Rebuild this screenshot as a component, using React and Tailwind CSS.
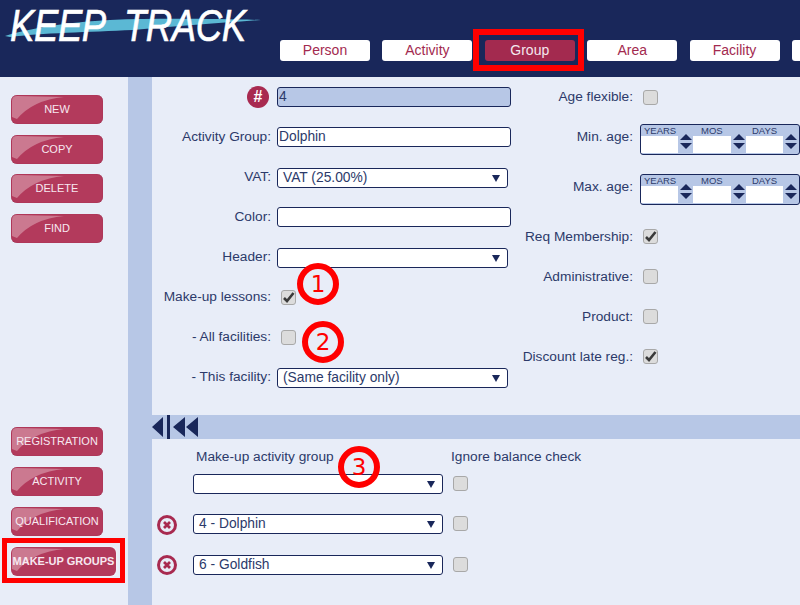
import React from "react";

const tabs = ["Person", "Activity", "Group", "Area", "Facility", ""];
const topButtons = ["NEW", "COPY", "DELETE", "FIND"];
const bottomButtons = ["REGISTRATION", "ACTIVITY", "QUALIFICATION"];

function Logo() {
  return (
    <div className="relative w-[280px] h-[77px] shrink-0">
      <svg className="absolute left-0 top-0" width="280" height="50" viewBox="0 0 280 50">
        <path d="M5 36 C30 28 70 22 110 20 C160 18 220 19 261 20 C220 23 170 27 133 30 C90 32 40 33 10 37 Z" fill="#5bb8d4" />
      </svg>
      <span className="absolute left-[10px] top-[1px] origin-left scale-x-[0.83] font-['Liberation_Sans',sans-serif] italic text-[44px] leading-[50px] tracking-[-0.5px] text-white whitespace-pre [-webkit-text-stroke:0.6px_white]">
        KEEP  TRACK
      </span>
    </div>
  );
}

function Tab({ label }) {
  const active = label === "Group";
  return (
    <div
      className={`relative w-[90px] h-[21px] shrink-0 rounded-[3px] flex items-center justify-center text-[14px] ${
        active ? "bg-[#a32a4f] text-[#f4e8ee]" : "bg-white text-[#a32a4f]"
      }`}
    >
      {label}
      {active && (
        <div className="absolute left-[-12px] right-[-9px] top-[-11px] bottom-[-10px] border-[6px] border-[#ff0000]" />
      )}
    </div>
  );
}

function SideButton({ label, wide }) {
  return (
    <div
      className={`relative h-[29px] rounded-[6px] bg-[#b33a5c] flex items-center justify-center text-[#f7e8f0] whitespace-nowrap ${
        wide ? "w-[105px] text-[11px] font-bold shadow-[0_0_3px_#ffffff]" : "w-[92px] text-[11px] shadow-[inset_0_0_1px_#8a2040]"
      }`}
    >
      <svg className="absolute left-0 top-0" width="70" height="29" viewBox="0 0 70 29">
        <path d="M1 6 Q1 1 6 1 L53 2 Q22 5 6 24 L1 22 Z" fill="#ffffff" fillOpacity="0.32" />
      </svg>
      <span className="relative">{label}</span>
    </div>
  );
}

function Checkbox({ checked, className = "" }) {
  return (
    <div
      className={`relative w-[15px] h-[15px] shrink-0 rounded-[3px] bg-[#dcdcdc] border-[1.5px] border-[#a8a8a8] ${className}`}
    >
      {checked && (
        <svg className="absolute left-[-1px] top-[-1px]" width="15" height="15" viewBox="0 0 15 15">
          <path d="M3 8 L6 11 L12.5 3" fill="none" stroke="#3a3a3a" strokeWidth="2.6" />
        </svg>
      )}
    </div>
  );
}

function Select({ value, className = "" }) {
  return (
    <div
      className={`h-[20px] rounded-[3px] border border-[#19275a] bg-white flex items-center justify-between pl-[5px] pr-[7px] text-[13.8px] text-[#2c3a6a] ${className}`}
    >
      <span>{value}</span>
      <svg width="8" height="7" viewBox="0 0 8 7">
        <path d="M0 0 H8 L4 7 Z" fill="#19275a" />
      </svg>
    </div>
  );
}

function TextInput({ value, blue }) {
  return (
    <div
      className={`w-[234px] h-[20px] rounded-[3px] border border-[#19275a] flex items-center pl-[1px] pt-[1px] text-[13.8px] text-[#2c3a6a] ${
        blue ? "bg-[#b7c7e6]" : "bg-white"
      }`}
    >
      {value}
    </div>
  );
}

function FormRow({ label, children }) {
  return (
    <div className="h-10 flex items-center">
      <div className="w-[119px] mr-[6px] text-right text-[13.7px] text-[#2c3a6a] whitespace-nowrap">
        {label}
      </div>
      {children}
    </div>
  );
}

function CheckRow({ label, checked, labelClass = "mt-[2px]" }) {
  return (
    <div className="h-10 flex items-center">
      <div className={`w-[118px] mr-[10px] text-right text-[13.7px] text-[#2c3a6a] whitespace-nowrap ${labelClass}`}>
        {label}
      </div>
      <Checkbox checked={checked} />
    </div>
  );
}

function Spinner() {
  return (
    <div className="w-[15px] h-[17px] -mt-[3px] flex flex-col items-center justify-center gap-[3px]">
      <svg width="12" height="6" viewBox="0 0 12 6">
        <path d="M0 6 L6 0 L12 6 Z" fill="#19275a" />
      </svg>
      <svg width="12" height="6" viewBox="0 0 12 6">
        <path d="M0 0 H12 L6 6 Z" fill="#19275a" />
      </svg>
    </div>
  );
}

function AgeBox() {
  return (
    <div className="w-[160px] h-[31px] shrink-0 rounded-[3px] border border-[#19275a] bg-[#b7c7e6] overflow-hidden">
      <div className="h-[11px] flex text-[9.5px] leading-[12px] text-[#2c3a6a]">
        <span className="w-[52px] pl-[3px]">YEARS</span>
        <span className="w-[53px] pl-[8px]">MOS</span>
        <span className="pl-[6px]">DAYS</span>
      </div>
      <div className="flex">
        <div className="w-[37px] h-[17px] bg-white" />
        <Spinner />
        <div className="w-[38px] h-[17px] bg-white" />
        <Spinner />
        <div className="w-[37px] h-[17px] bg-white" />
        <Spinner />
      </div>
    </div>
  );
}

function AgeRow({ label, className }) {
  return (
    <div className={`flex items-center ${className}`}>
      <div className="w-[118px] mr-[7px] text-right text-[13.7px] text-[#2c3a6a] mb-[5px]">{label}</div>
      <AgeBox />
    </div>
  );
}

function Marker({ n, className }) {
  return (
    <div
      className={`absolute w-[42px] h-[42px] rounded-full border-[6px] border-[#ff0000] flex items-center justify-center font-['DejaVu_Sans',sans-serif] text-[23px] leading-none text-[#ff0000] ${className}`}
    >
      {n}
    </div>
  );
}

function RemoveIcon() {
  return (
    <svg width="20" height="20" viewBox="0 0 20 20" className="shrink-0">
      <circle cx="10" cy="10" r="8.5" fill="none" stroke="#a82a50" strokeWidth="3" />
      <path d="M7 7 L13 13 M13 7 L7 13" stroke="#a82a50" strokeWidth="2.8" />
    </svg>
  );
}

export default function App() {
  return (
    <div className="relative w-[800px] h-[605px] overflow-hidden bg-[#e8edf8] font-['Liberation_Sans',Arial,sans-serif]">
      <header className="h-[77px] bg-[#19275a] flex overflow-hidden">
        <Logo />
        <nav className="flex gap-[12.4px] pt-[40px]">
          {tabs.map((t, i) => (
            <Tab key={i} label={t} />
          ))}
        </nav>
      </header>

      <div className="flex h-[528px]">
        <aside className="w-[128px] shrink-0 pl-[11px] pt-[18px] flex flex-col">
          <div className="flex flex-col gap-[10.6px]">
            {topButtons.map((b) => (
              <SideButton key={b} label={b} />
            ))}
          </div>
          <div className="mt-[184px] flex flex-col gap-[11px]">
            {bottomButtons.map((b) => (
              <SideButton key={b} label={b} />
            ))}
            <div className="relative">
              <SideButton label="MAKE-UP GROUPS" wide />
              <div className="absolute left-[-9px] top-[-9px] w-[123px] h-[45px] border-[5px] border-[#ff0000]" />
            </div>
          </div>
        </aside>

        <div className="w-[24px] shrink-0 bg-[#b7c7e6]" />

        <main className="flex-1 min-w-0 relative">
          <div className="flex">
            <div className="w-[359px] shrink-0">
              <FormRow
                label={
                  <span className="inline-flex w-[22px] h-[22px] rounded-full bg-[#a82a50] text-white font-bold text-[16px] items-center justify-center mr-[2px]">
                    #
                  </span>
                }
              >
                <TextInput value="4" blue />
              </FormRow>
              <FormRow label="Activity Group:">
                <TextInput value="Dolphin" />
              </FormRow>
              <FormRow label="VAT:">
                <Select value="VAT (25.00%)" className="w-[231px] mt-[2px]" />
              </FormRow>
              <FormRow label="Color:">
                <TextInput value="" />
              </FormRow>
              <FormRow label="Header:">
                <Select value="" className="w-[231px] mt-[2px]" />
              </FormRow>
              <FormRow label="Make-up lessons:">
                <Checkbox checked className="ml-[4px]" />
              </FormRow>
              <FormRow label="- All facilities:">
                <Checkbox className="ml-[4px]" />
              </FormRow>
              <FormRow label="- This facility:">
                <Select value="(Same facility only)" className="w-[231px] mt-[2px]" />
              </FormRow>
            </div>
            <div className="ml-[4px] flex-1 min-w-0">
              <CheckRow label="Age flexible:" labelClass="" />
              <AgeRow label="Min. age:" className="mt-[7px]" />
              <AgeRow label="Max. age:" className="mt-[19px]" />
              <div className="mt-[11px]">
                <CheckRow label="Req Membership:" checked />
                <CheckRow label="Administrative:" />
                <CheckRow label="Product:" />
                <CheckRow label="Discount late reg.:" checked />
              </div>
            </div>
          </div>

          <div className="mt-[18px] h-[24px] bg-[#b7c7e6] flex items-center">
            <svg width="50" height="24" viewBox="0 0 50 24">
              <path d="M0 12 L11 2 V22 Z M21 12 L33 2 V22 Z M34 12 L46 2 V22 Z" fill="#19275a" />
              <rect x="15" y="0" width="3" height="24" fill="#19275a" />
            </svg>
          </div>

          <div className="pl-[41px] pt-[9px]">
            <div className="flex text-[13.7px] text-[#2c3a6a] h-[18px] leading-[18px]">
              <span className="ml-[3px] w-[255px]">Make-up activity group</span>
              <span>Ignore balance check</span>
            </div>
            <div className="mt-[8px] flex items-center">
              <Select value="" className="w-[250px]" />
              <Checkbox className="ml-[10px] -mt-[2px]" />
            </div>
            <div className="mt-[20px] flex items-center relative">
              <div className="absolute left-[-36px] top-[1px]">
                <RemoveIcon />
              </div>
              <Select value="4 - Dolphin" className="w-[250px]" />
              <Checkbox className="ml-[10px] -mt-[2px]" />
            </div>
            <div className="mt-[21px] flex items-center relative">
              <div className="absolute left-[-36px] top-[0px]">
                <RemoveIcon />
              </div>
              <Select value="6 - Goldfish" className="w-[250px]" />
              <Checkbox className="ml-[10px] -mt-[2px]" />
            </div>
          </div>

          <Marker n="1" className="left-[145px] top-[186px]" />
          <Marker n="2" className="left-[150px] top-[244px]" />
          <Marker n="3" className="left-[186px] top-[369px]" />
        </main>
      </div>
    </div>
  );
}
